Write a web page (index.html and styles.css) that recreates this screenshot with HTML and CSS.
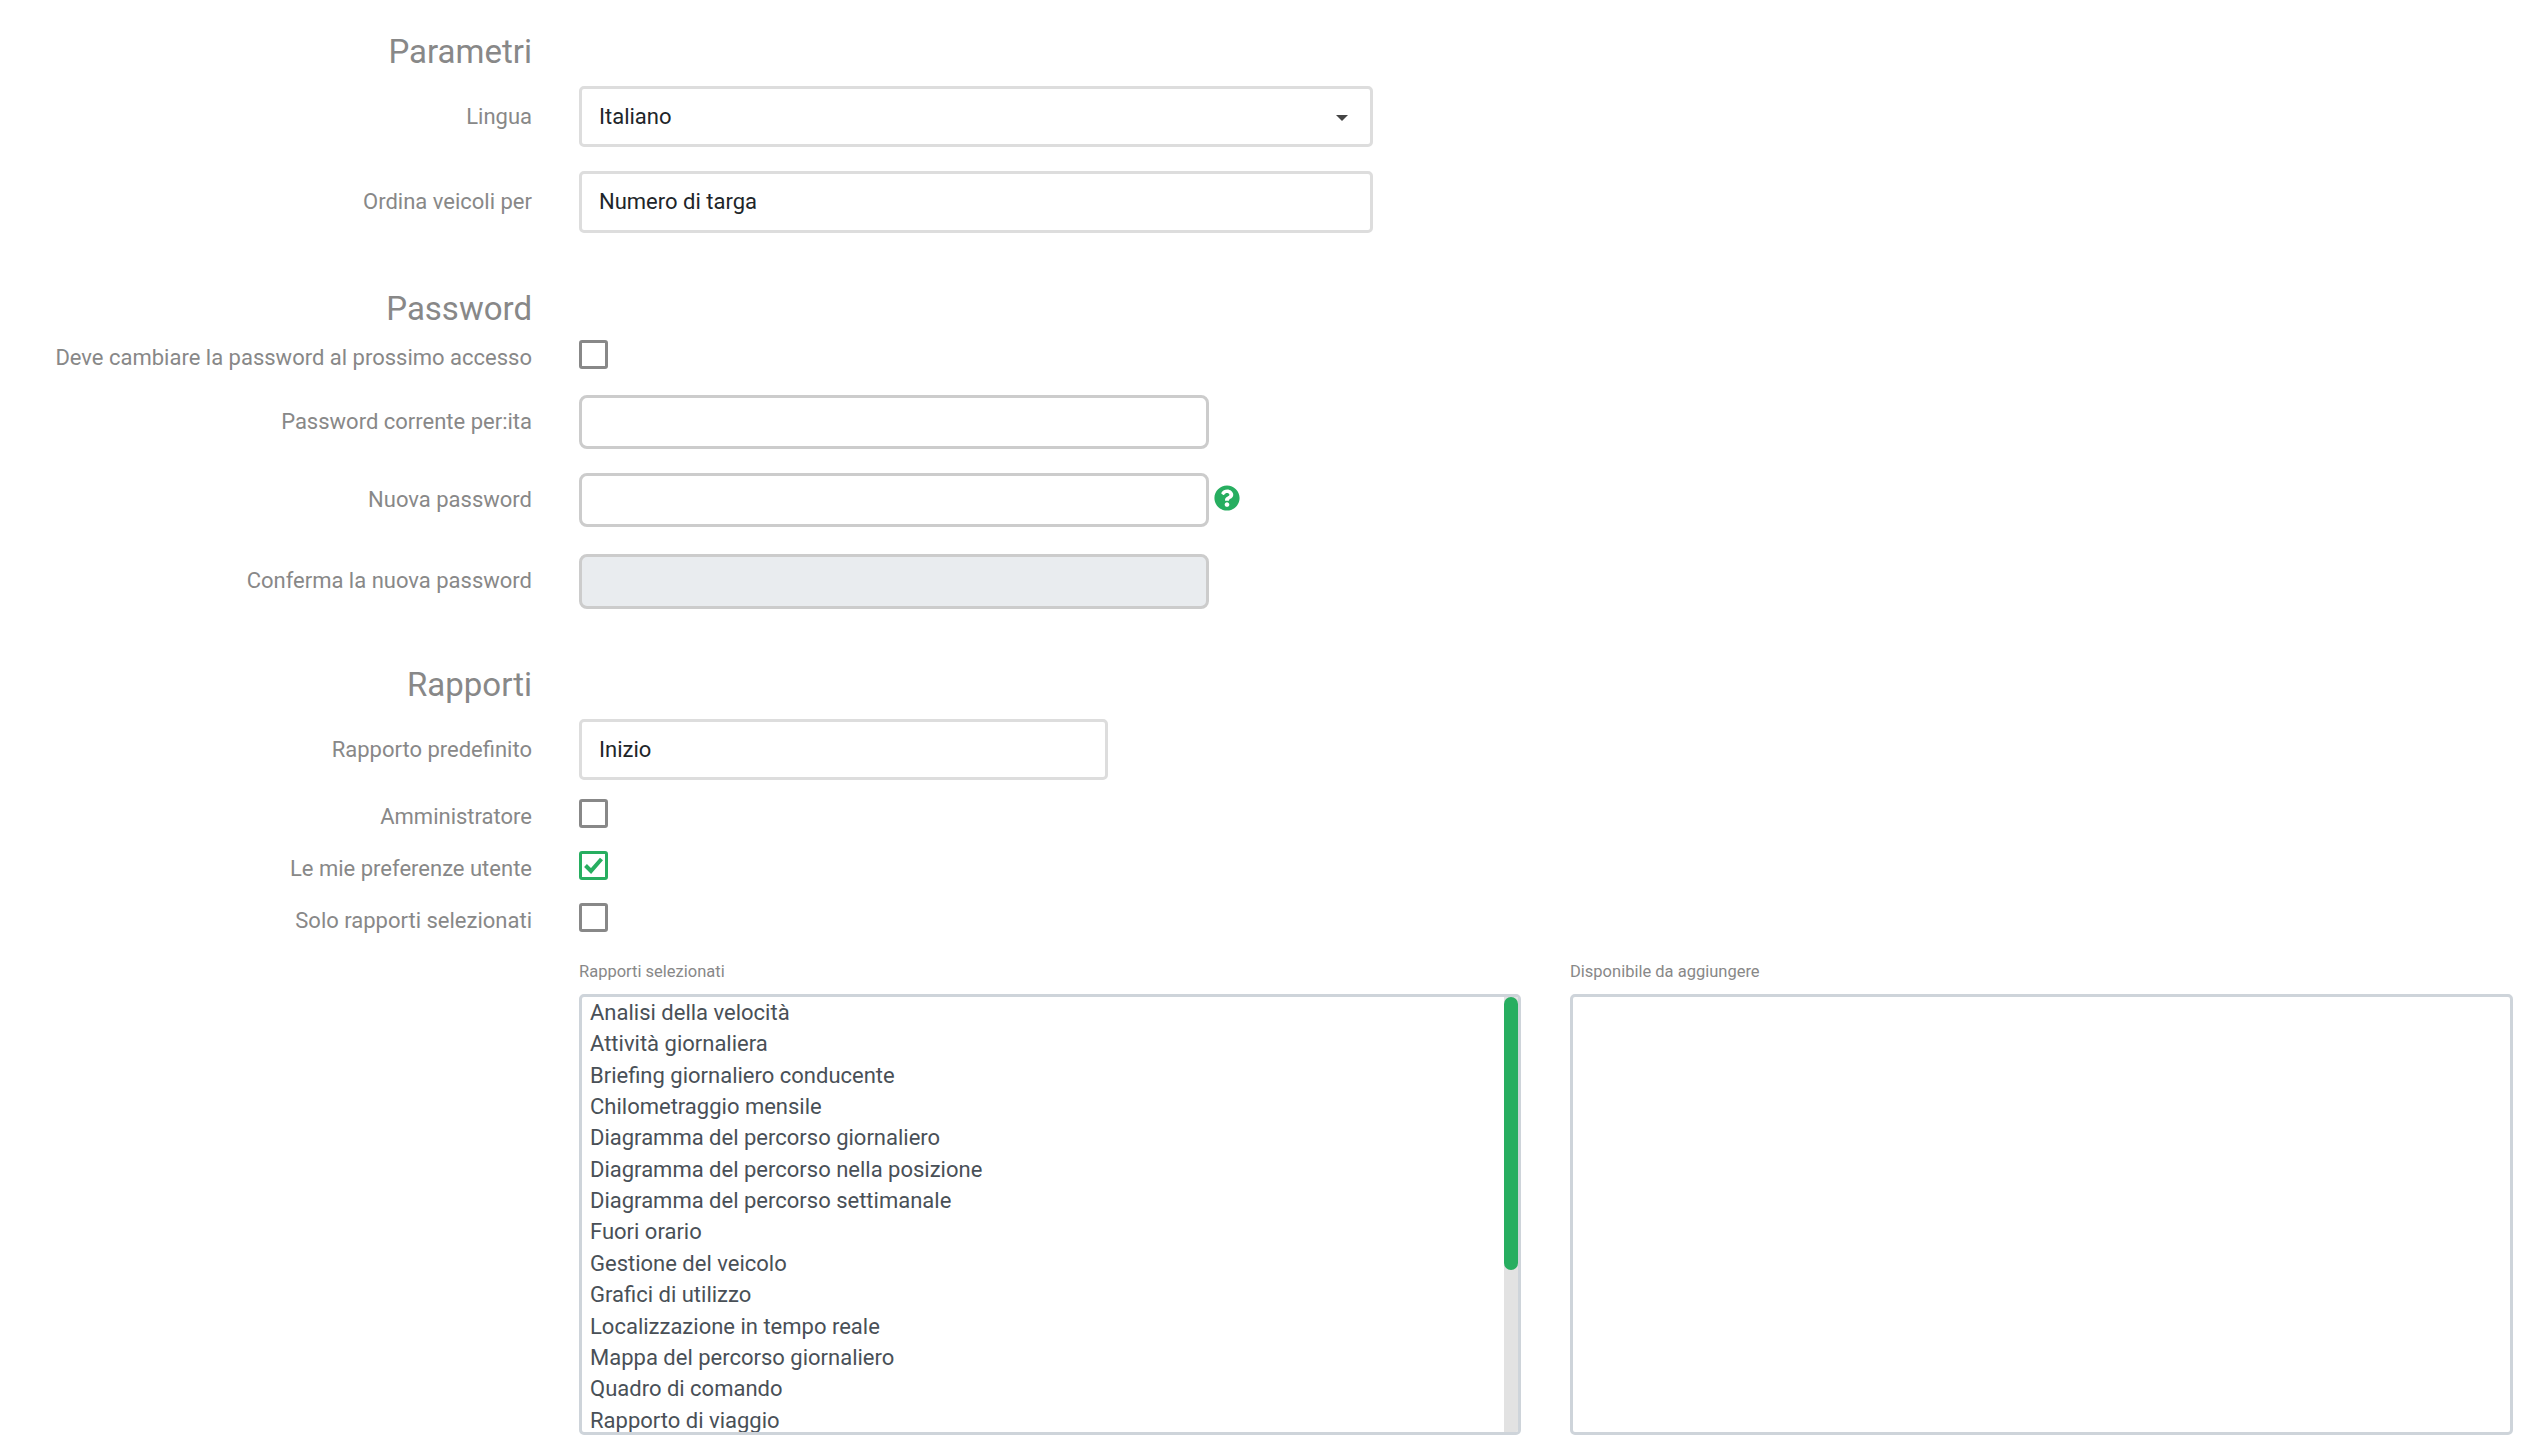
FILE: index.html
```html
<!DOCTYPE html>
<html lang="it">
<head>
<meta charset="utf-8">
<title>Parametri</title>
<link rel="stylesheet" href="styles.css">
</head>
<body>
<form class="form">
  <h2 class="heading heading-first">Parametri</h2>
  <div class="row">
    <label class="label">Lingua</label>
    <div class="field field-wide select"><span>Italiano</span><i class="caret"></i></div>
  </div>
  <div class="row row-gap">
    <label class="label">Ordina veicoli per</label>
    <div class="field field-wide field-tall"><span>Numero di targa</span></div>
  </div>

  <h2 class="heading heading-password">Password</h2>
  <div class="row row-check row-check-first">
    <label class="label label-check">Deve cambiare la password al prossimo accesso</label>
    <span class="check"></span>
  </div>
  <div class="row row-pass-first">
    <label class="label">Password corrente per:ita</label>
    <input class="pass" type="text">
  </div>
  <div class="row row-gap">
    <label class="label">Nuova password</label>
    <input class="pass" type="text">
    <svg class="help" viewBox="0 0 512 512" aria-hidden="true"><path fill="#27ae60" d="M504 256c0 137-111 248-248 248S8 393 8 256 119 8 256 8s248 111 248 248zM262.700 90c-54.500 0-89.300 23-116.500 63.800-3.500 5.300-2.400 12.400 2.700 16.300l34.700 26.300c5.200 3.900 12.600 3 16.700-2.100 17.900-22.700 30.100-35.800 57.300-35.800 20.400 0 45.700 13.100 45.700 32.900 0 15-12.400 22.700-32.500 34-23.500 13.200-54.600 29.600-54.600 70.600V300c0 6.600 5.400 12 12 12h56c6.600 0 12-5.400 12-12v-1.300c0-28.400 83-29.600 83-106.500C378.200 134.200 318.100 90 262.700 90zM256 338c-25.400 0-46 20.600-46 46 0 25.400 20.600 46 46 46s46-20.600 46-46c0-25.400-20.600-46-46-46z"/></svg>
  </div>
  <div class="row row-gap-confirm">
    <label class="label label-confirm">Conferma la nuova password</label>
    <input class="pass pass-disabled" type="text" disabled>
  </div>

  <h2 class="heading heading-reports">Rapporti</h2>
  <div class="row">
    <label class="label">Rapporto predefinito</label>
    <div class="field field-narrow"><span>Inizio</span></div>
  </div>
  <div class="row row-check row-check-admin">
    <label class="label label-check">Amministratore</label>
    <span class="check"></span>
  </div>
  <div class="row row-check row-check-next">
    <label class="label label-check">Le mie preferenze utente</label>
    <span class="check check-on"><svg viewBox="0 0 23 23" aria-hidden="true"><path d="M3.500 11.500l5.500 5.500 10.500-12" fill="none" stroke="#27ae60" stroke-width="4"/></svg></span>
  </div>
  <div class="row row-check row-check-next">
    <label class="label label-check">Solo rapporti selezionati</label>
    <span class="check"></span>
  </div>

  <div class="lists">
    <div class="list-col list-col-left">
      <div class="list-title">Rapporti selezionati</div>
      <div class="listbox">
        <ul class="items">
          <li>Analisi della velocità</li>
          <li>Attività giornaliera</li>
          <li>Briefing giornaliero conducente</li>
          <li>Chilometraggio mensile</li>
          <li>Diagramma del percorso giornaliero</li>
          <li>Diagramma del percorso nella posizione</li>
          <li>Diagramma del percorso settimanale</li>
          <li>Fuori orario</li>
          <li>Gestione del veicolo</li>
          <li>Grafici di utilizzo</li>
          <li>Localizzazione in tempo reale</li>
          <li>Mappa del percorso giornaliero</li>
          <li>Quadro di comando</li>
          <li>Rapporto di viaggio</li>
        </ul>
        <div class="track"><div class="thumb"></div></div>
      </div>
    </div>
    <div class="list-col list-col-right">
      <div class="list-title">Disponibile da aggiungere</div>
      <div class="listbox"></div>
    </div>
  </div>
</form>
</body>
</html>
```
FILE: styles.css
```css
* { box-sizing: border-box; }
html, body { margin: 0; padding: 0; background: #fff; overflow: hidden; }
body { font-family: Roboto, "Liberation Sans", sans-serif; font-size: 22px; color: #212529; height: 1454px; }
.form { display: flex; flex-direction: column; }
.heading { margin: 0; width: 532px; text-align: right; font-size: 33px; font-weight: 400; line-height: 40px; color: #888; }
.heading-first { margin-top: 32px; margin-bottom: 14px; }
.heading-password { margin-top: 56px; margin-bottom: 11px; }
.heading-reports { margin-top: 56px; margin-bottom: 14px; }
.row { display: flex; align-items: center; gap: 0; }
.row-gap { margin-top: 24px; }
.row-gap-confirm { margin-top: 27px; }
.row-pass-first { margin-top: 26px; }
.label { width: 532px; margin-right: 47px; flex: none; text-align: right; color: #888; line-height: 32px; }
.label-check { margin-top: 2px; }
.label-confirm { margin-bottom: 2px; }
.field { display: flex; align-items: center; height: 61px; padding: 0 16px 1px 17px; border: 3px solid #ddd; border-radius: 5px; background: #fff; color: #212529; }
.field-tall { height: 62px; }
.field-wide { width: 794px; }
.field-narrow { width: 529px; }
.select { justify-content: space-between; padding-right: 22px; }
.caret { width: 0; height: 0; border-left: 6px solid transparent; border-right: 6px solid transparent; border-top: 6px solid #444; margin-top: 3px; }
.pass { display: block; width: 630px; height: 54px; border: 3px solid #ccc; border-radius: 8px; background: #fff; padding: 0 16px; font: inherit; outline: none; }
.pass-disabled { background: #e9ecef; height: 55px; }
.help { width: 26px; height: 26px; margin-left: 5px; margin-top: -4px; }
.row-check { align-items: flex-start; height: 29px; }
.row-check-first { margin-top: 0; }
.row-check-admin { margin-top: 19px; }
.row-check-next { margin-top: 23px; }
.check { display: block; width: 29px; height: 29px; border: 3px solid #888; border-radius: 3px; background: #fff; flex: none; }
.check-on { border-color: #27ae60; }
.check-on svg { display: block; width: 23px; height: 23px; }
.lists { display: flex; margin-top: 30px; margin-left: 579px; }
.list-col { display: flex; flex-direction: column; }
.list-col-left { width: 942px; }
.list-col-right { width: 943px; margin-left: 49px; }
.list-title { font-size: 16.500px; line-height: 24px; color: #888; margin-bottom: 8px; margin-top: -2px; padding-bottom: 2px; }
.listbox { display: flex; height: 441px; border: 3px solid #ced4da; border-radius: 5px; background: #fff; overflow: hidden; }
.items { flex: 1; margin: 0; padding: 0 0 0 8px; list-style: none; color: #495057; overflow: hidden; }
.items li { height: 31.400px; line-height: 31.400px; white-space: nowrap; position: relative; top: -0.250px; }
.track { flex: none; width: 14px; background: #e2e2e2; }
.thumb { height: 273px; background: #27ae60; border-radius: 7px; }
```
